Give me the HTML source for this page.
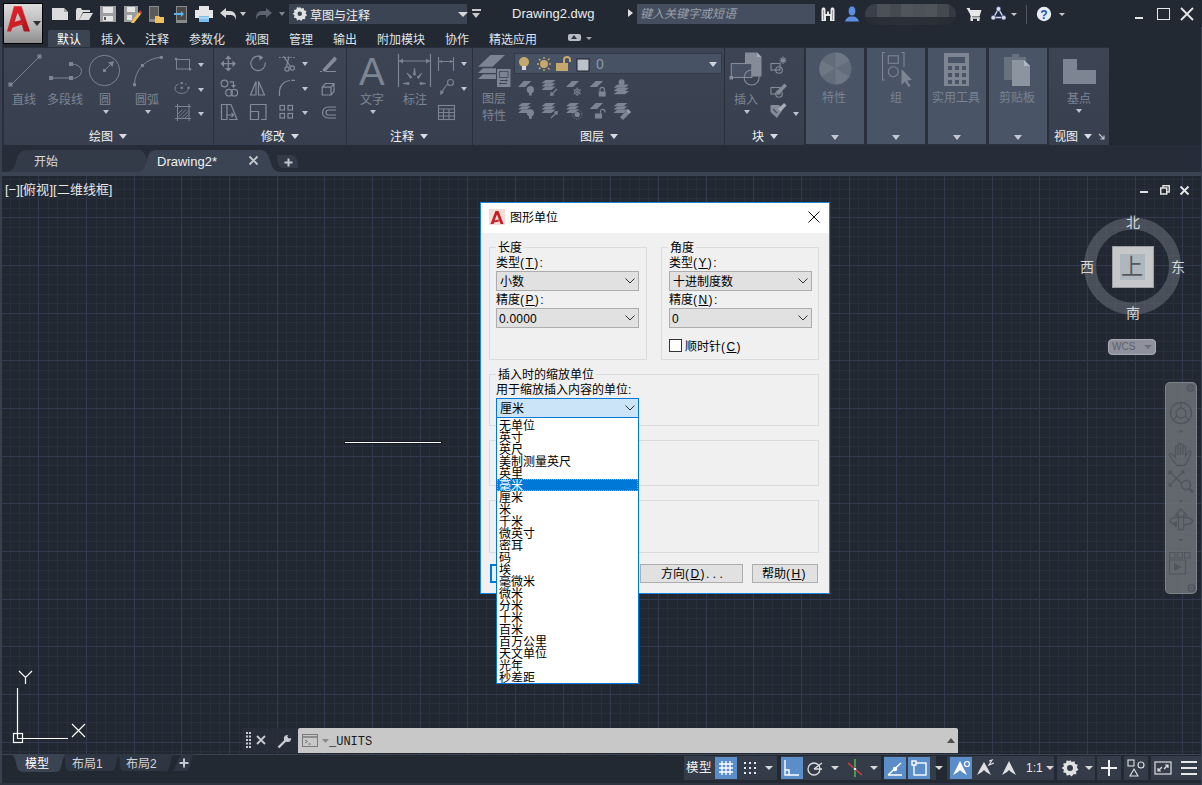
<!DOCTYPE html>
<html lang="zh-CN"><head><meta charset="utf-8"><title>AutoCAD</title>
<style>
*{box-sizing:border-box;margin:0;padding:0}
html,body{width:1202px;height:785px;overflow:hidden;background:#222932;font-family:"Liberation Sans",sans-serif;font-size:12px;color:#e6e6e6}
.a{position:absolute}
.t{position:absolute;white-space:nowrap;line-height:1}
svg{position:absolute;overflow:visible}
.tab{position:absolute;top:33.5px;font-size:12px;color:#dfe3ea;white-space:nowrap;line-height:1}
.pn{position:absolute;top:48px;height:97px;background:linear-gradient(#3d4555,#384050)}
.cp{position:absolute;top:48px;height:96px;background:#4a5467}
.lbl{position:absolute;font-size:12px;color:#7d8593;white-space:nowrap;line-height:1}
.ptl{position:absolute;top:131px;font-size:12px;color:#f2f2f2;white-space:nowrap;line-height:1}
.tri{position:absolute;width:0;height:0;border-left:4px solid transparent;border-right:4px solid transparent;border-top:5px solid #d8dce2}
.trs{position:absolute;width:0;height:0;border-left:3px solid transparent;border-right:3px solid transparent;border-top:4px solid #8d95a2}
.dlg{font-family:"Liberation Sans",sans-serif;color:#000;font-weight:350}
.gb{position:absolute;border:1px solid #dcdcdc}
.cb{position:absolute;background:#e1e1e1;border:1px solid #adadad}
.it{position:absolute;left:2px;height:12px;font-size:12px;line-height:12px;color:#000;font-weight:500;white-space:nowrap}
</style></head><body>
<!-- left strip -->
<div class="a" style="left:0;top:27px;width:2px;height:758px;background:#394150"></div>
<!-- app button -->
<div class="a" style="left:3px;top:3px;width:40px;height:41px;background:#000"></div>
<div class="a" style="left:4px;top:4px;width:38px;height:39px;background:linear-gradient(#dcdcdc,#b4b4b4 60%,#8e8e8e)"></div>
<svg style="left:0;top:0" width="40" height="40">
<defs><linearGradient id="lg" x1="0" y1="0" x2="1" y2="1"><stop offset="0" stop-color="#e8262e"/><stop offset="0.6" stop-color="#c81c24"/><stop offset="1" stop-color="#a0141a"/></linearGradient></defs>
<path d="M7 31.5L14 6.2H21.5L30 31.5H23.8L21.8 24.8L12.3 27.8L11 31.5ZM17.6 12.5L14.6 22L21 20Z" fill="url(#lg)" fill-rule="evenodd"/>
<path d="M14 6.2L11 17M21.5 6.2L26 20M12.3 27.8L22.5 23" stroke="#f06060" stroke-width="0.6" fill="none" opacity="0.6"/>
</svg>
<div class="a" style="left:33px;top:21px;width:0;height:0;border-left:4px solid transparent;border-right:4px solid transparent;border-top:5px solid #303030"></div>
<!-- QAT icons -->
<svg style="left:52px;top:8px" width="17" height="13"><path d="M0 0H12L16 4V12H0Z" fill="#dcdcdc"/><path d="M12 0V4H16" fill="#a0a0a0"/></svg>
<svg style="left:76px;top:8px" width="17" height="13"><path d="M0 2V12H3L7 4H14V2H6L5 0H1Z" fill="#dcdcdc"/><path d="M3 12H13L17 5H7Z" fill="#dcdcdc"/></svg>
<svg style="left:100px;top:6px" width="17" height="16"><path d="M0 0H16V16H0Z" fill="#9e9e9e"/><path d="M3 1H13V7H3Z" fill="#e6e6e6"/><path d="M3 10H13V15H3Z" fill="#e6e6e6"/><path d="M4 11H6V14H4Z" fill="#555"/></svg>
<svg style="left:124px;top:6px" width="17" height="17"><path d="M0 0H14V11L9 16H0Z" fill="#9e9e9e"/><path d="M3 1H11V6H3Z" fill="#e6e6e6"/><path d="M3 9H8V14H3Z" fill="#e6e6e6"/><path d="M8 15L15 6L17 8L10 17L7 17Z" fill="#f0c060"/><path d="M15 6L16.5 4.5L18 6.5L17 8Z" fill="#e04040"/></svg>
<svg style="left:149px;top:6px" width="16" height="17"><path d="M0 0H10V16H0Z" fill="#8a8a8a"/><path d="M1 1H9V13H1Z" fill="#5a5a5a"/><path d="M6 11H15V17H6Z" fill="#f0c060"/><path d="M6 10H10L11 11H6Z" fill="#f0c060"/></svg>
<svg style="left:174px;top:6px" width="14" height="17"><path d="M2 0H13V17H2Z" fill="#8a8a8a"/><path d="M3 1H12V14H3Z" fill="#4a4a4a"/><path d="M0 7H7V5L10 8L7 11V9H0Z" fill="#5ab4f0"/></svg>
<svg style="left:195px;top:6px" width="18" height="16"><path d="M4 0H14V4H4Z" fill="#e6e6e6"/><path d="M0 4H18V12H0Z" fill="#e6e6e6"/><path d="M4 10H14V16H4Z" fill="#78bff0"/><path d="M4 12H14" stroke="#e6e6e6"/></svg>
<svg style="left:220px;top:8px" width="16" height="12"><path d="M0 5L6 0V3H10C14 3 16 6 16 10V12C15 8 13 7 10 7H6V10Z" fill="#d8d8d8"/></svg>
<div class="tri" style="left:240px;top:12px;border-width:4px 3px 0;border-top-color:#c8c8c8"></div>
<svg style="left:256px;top:8px" width="16" height="12"><path d="M16 5L10 0V3H6C2 3 0 6 0 10V12C1 8 3 7 6 7H10V10Z" fill="#5d6370"/></svg>
<div class="tri" style="left:279px;top:12px;border-width:4px 3px 0;border-top-color:#7d838f"></div>
<!-- workspace combo -->
<div class="a" style="left:289px;top:4px;width:178px;height:20px;background:#3b4453"></div>
<svg style="left:292px;top:6px" width="15.5" height="15.5" viewBox="0 0 14 14"><path d="M7 0.5L8.3 2.3L10.5 1.7L10.9 3.9L13.1 4.5L12.3 6.6L13.6 8.4L11.8 9.6L11.9 11.9L9.6 11.8L8.4 13.6L6.6 12.3L4.5 13.1L3.9 10.9L1.7 10.5L2.3 8.3L0.5 7L2.3 5.7L1.7 3.5L3.9 3.1L4.5 0.9L6.6 1.7Z" fill="#e0e0e0"/><circle cx="7" cy="7" r="2" fill="#3b4453"/></svg>
<div class="t" style="left:310px;top:9.5px;font-size:12px;color:#f0f0f0">草图与注释</div>
<div class="tri" style="left:458px;top:12px;border-width:5px 5px 0;border-top-color:#d8d8d8"></div>
<div class="a" style="left:472px;top:9px;width:9px;height:2px;background:#c8c8c8"></div>
<div class="tri" style="left:472px;top:13px;border-width:5px 4.5px 0;border-top-color:#c8c8c8"></div>
<!-- title -->
<div class="t" style="left:512px;top:7px;font-size:13px;color:#ececec">Drawing2.dwg</div>
<div class="a" style="left:628px;top:9px;width:0;height:0;border-top:4px solid transparent;border-bottom:4px solid transparent;border-left:5px solid #e0e0e0"></div>
<!-- search -->
<div class="a" style="left:637px;top:4px;width:178px;height:20px;background:#454e5e"></div>
<div class="t" style="left:640px;top:8px;font-size:12px;color:#9aa0aa;font-style:italic">键入关键字或短语</div>
<!-- binoc/user -->
<svg style="left:820px;top:7px" width="16" height="15"><path d="M1.5 3C1.5 1 2.5 0.5 3.5 0.5S5.5 1 5.5 3V7H7V4.5H9V7H10.5V3C10.5 1 11.5 0.5 12.5 0.5S14.5 1 14.5 3V14H10V9H6V14H1.5Z" fill="#e8e8e8"/><path d="M3.5 3V13M12.5 3V13" stroke="#9a9a9a" stroke-width="1"/></svg>
<svg style="left:844px;top:5px" width="16" height="17"><ellipse cx="8" cy="6" rx="3.8" ry="5" fill="#5e8ee0" stroke="#1c2a40" stroke-width="0.8"/><path d="M1 16.5C2 13 4 12 6 11.5H10C12 12 14 13 15 16.5Z" fill="#5e8ee0"/></svg>
<div class="a" style="left:865px;top:4px;width:91px;height:21px;border-radius:10px;overflow:hidden;background:#262b34">
<div class="a" style="left:0;top:0;width:91px;height:13px;background:linear-gradient(90deg,#3a4049 0,#3a4049 12px,#4c5057 12px,#4c5057 25px,#454a52 25px,#454a52 36px,#51545a 36px,#51545a 48px,#4d5158 48px,#4d5158 60px,#505358 60px,#505358 72px,#44484f 72px,#44484f 84px,#353a42 84px)"></div>
<div class="a" style="left:0;top:13px;width:91px;height:8px;background:linear-gradient(90deg,#272c35,#2c3038 40%,#2a2e36 70%,#262b34)"></div>
</div>
<svg style="left:966px;top:7px" width="16" height="14"><path d="M0.5 1H3L4 3H15.5L13.5 9.5H5.5Z" fill="#e8e8e8"/><path d="M3 1L5.5 9.5L5 11H14" stroke="#e8e8e8" stroke-width="1.3" fill="none"/><rect x="4.5" y="11.5" width="2.5" height="2.5" fill="#e8e8e8"/><rect x="11" y="11.5" width="2.5" height="2.5" fill="#e8e8e8"/></svg>
<svg style="left:990px;top:6px" width="17" height="15"><path d="M8.5 3L3.5 11.5H13.5Z" stroke="#1a2a60" stroke-width="2.6" fill="none"/><path d="M8.5 3L3.5 11.5H13.5Z" stroke="#d8dce8" stroke-width="1.4" fill="none"/><circle cx="8.5" cy="3" r="2.4" fill="#d8dce8" stroke="#1a2a60" stroke-width="0.6"/><circle cx="3.3" cy="11.7" r="2.4" fill="#d8dce8" stroke="#1a2a60" stroke-width="0.6"/><circle cx="13.7" cy="11.7" r="2.4" fill="#d8dce8" stroke="#1a2a60" stroke-width="0.6"/></svg>
<div class="tri" style="left:1011px;top:13px;border-width:3px 3px 0;border-top-color:#c8c8c8"></div>
<div class="a" style="left:1026px;top:5px;width:1px;height:19px;background:#50575f"></div>
<svg style="left:1036px;top:6px" width="16" height="16"><circle cx="8" cy="8" r="7.2" fill="#e8ecf4"/><text x="8" y="12.5" font-size="12" font-weight="bold" text-anchor="middle" fill="#2050a8" font-family="Liberation Sans">?</text></svg>
<div class="tri" style="left:1059px;top:13px;border-width:3px 3px 0;border-top-color:#c8c8c8"></div>
<!-- window controls -->
<div class="a" style="left:1135px;top:17px;width:8px;height:2px;background:#e6e6e6"></div>
<div class="a" style="left:1157px;top:8px;width:13px;height:12px;border:1.5px solid #e6e6e6"></div>
<svg style="left:1180px;top:7px" width="14" height="14"><path d="M1 1L13 13M13 1L1 13" stroke="#e6e6e6" stroke-width="1.8"/></svg>
<!-- tabs row -->
<div class="a" style="left:48px;top:30px;width:42px;height:18px;background:#3b4453;border-radius:2px 2px 0 0"></div>
<div class="tab" style="left:57px;color:#ffffff">默认</div>
<div class="tab" style="left:101px">插入</div>
<div class="tab" style="left:145px">注释</div>
<div class="tab" style="left:189px">参数化</div>
<div class="tab" style="left:245px">视图</div>
<div class="tab" style="left:289px">管理</div>
<div class="tab" style="left:333px">输出</div>
<div class="tab" style="left:377px">附加模块</div>
<div class="tab" style="left:445px">协作</div>
<div class="tab" style="left:489px">精选应用</div>
<div class="a" style="left:568px;top:34px;width:13px;height:7px;background:#b8bcc4;border-radius:2px"></div>
<div class="a" style="left:571px;top:35px;width:0;height:0;border-left:3.5px solid transparent;border-right:3.5px solid transparent;border-bottom:4px solid #30353f"></div>
<div class="tri" style="left:586px;top:37px;border-width:3px 3px 0;border-top-color:#a0a4ac"></div>
<!-- ribbon panels -->
<div class="a" style="left:2px;top:47px;width:1107px;height:98px;background:#2a303b"></div>
<div class="a" style="left:1109px;top:47px;width:93px;height:98px;background:#222932"></div>
<div class="pn" style="left:4px;width:209px"></div>
<div class="pn" style="left:214px;width:132px"></div>
<div class="pn" style="left:347px;width:125px"></div>
<div class="pn" style="left:473px;width:251px"></div>
<div class="pn" style="left:725px;width:79px"></div>
<div class="cp" style="left:806px;width:58px"></div>
<div class="cp" style="left:867px;width:58px"></div>
<div class="cp" style="left:928px;width:58px"></div>
<div class="cp" style="left:989px;width:58px"></div>
<div class="pn" style="left:1049px;width:60px"></div>
<!-- panel titles -->
<div class="ptl" style="left:89px">绘图</div><div class="tri" style="left:119px;top:134px"></div>
<div class="ptl" style="left:261px">修改</div><div class="tri" style="left:291px;top:134px"></div>
<div class="ptl" style="left:390px">注释</div><div class="tri" style="left:420px;top:134px"></div>
<div class="ptl" style="left:580px">图层</div><div class="tri" style="left:610px;top:134px"></div>
<div class="ptl" style="left:752px">块</div><div class="tri" style="left:770px;top:134px"></div>
<div class="tri" style="left:831px;top:135px;border-top-color:#c4c8d0"></div>
<div class="tri" style="left:892px;top:135px;border-top-color:#c4c8d0"></div>
<div class="tri" style="left:953px;top:135px;border-top-color:#c4c8d0"></div>
<div class="tri" style="left:1014px;top:135px;border-top-color:#c4c8d0"></div>
<div class="ptl" style="left:1054px">视图</div><div class="tri" style="left:1084px;top:134px"></div>
<svg style="left:1098px;top:133px" width="7" height="7"><path d="M1 1L6 6M6 2.5V6H2.5" stroke="#c4c8d0" stroke-width="1.1" fill="none"/></svg>
<!-- draw panel -->
<svg style="left:8px;top:54px" width="170" height="36" viewBox="0 0 170 36" fill="none" stroke="#7d8593" stroke-width="1">
<path d="M3 31L31 3"/><rect x="1" y="29" width="3" height="3" fill="#7d8593"/><rect x="30" y="1" width="3" height="3" fill="#7d8593"/>
<path d="M44 24H63"/><path d="M63.5 10A10 7.2 0 0 1 63.5 24.5"/><rect x="41.5" y="22.5" width="3" height="3" fill="#7d8593"/><rect x="61.5" y="22.5" width="3" height="3" fill="#7d8593"/><rect x="61.5" y="8.5" width="3" height="3" fill="#7d8593"/>
<circle cx="96.4" cy="16.5" r="15.2"/><path d="M97 16L103 10"/><path d="M106 7L104.5 13L100 8.5Z" fill="#7d8593" stroke="none"/><rect x="95" y="15" width="3" height="3" fill="#7d8593" stroke="none"/>
<path d="M126.5 30.7A27.3 27.3 0 0 1 153.3 3.4"/><rect x="125" y="29.2" width="3" height="3" fill="#7d8593" stroke="none"/><rect x="132.9" y="10" width="3" height="3" fill="#7d8593" stroke="none"/><rect x="151.8" y="1.9" width="3" height="3" fill="#7d8593" stroke="none"/>
</svg>
<div class="lbl" style="left:12px;top:94px">直线</div>
<div class="lbl" style="left:47px;top:94px">多段线</div>
<div class="lbl" style="left:99px;top:94px">圆</div>
<div class="trs" style="left:103px;top:110px;border-top-color:#c0c4cc"></div>
<div class="lbl" style="left:135px;top:94px">圆弧</div>
<div class="trs" style="left:145px;top:110px;border-top-color:#c0c4cc"></div>
<svg style="left:174px;top:55px" width="40" height="80" fill="none" stroke="#7d8593" stroke-width="1">
<rect x="2.5" y="4.5" width="13" height="9.5"/><rect x="0.8" y="2.8" width="2.4" height="2.4" fill="#7d8593" stroke="none"/><rect x="14.8" y="13" width="2.4" height="2.4" fill="#7d8593" stroke="none"/>
<path d="M4.5 29A6.7 5 0 1 0 14.2 34.5M11 28.5L12.5 29.5" /><rect x="6.6" y="27" width="2.2" height="2.2" fill="#7d8593" stroke="none"/><rect x="6.6" y="31.7" width="2.2" height="2.2" fill="#7d8593" stroke="none"/><rect x="13.4" y="31.7" width="2.2" height="2.2" fill="#7d8593" stroke="none"/>
<path d="M1 51.5H17M1 63.5H17M3.5 49V66M15 49V66"/><path d="M4 59L8.5 54.5M4 62.5L12 54.5M7.5 63L14.5 56M11 63L14.5 59.5" stroke-width="0.9"/>
</svg>
<div class="trs" style="left:198px;top:63px;border-top-color:#c0c4cc"></div>
<div class="trs" style="left:198px;top:88px;border-top-color:#c0c4cc"></div>
<div class="trs" style="left:198px;top:112px;border-top-color:#c0c4cc"></div>
<!-- modify panel -->
<svg style="left:214px;top:50px" width="132" height="75" fill="none" stroke="#858c98" stroke-width="1.2">
<path d="M14.3 8V19.5M8.5 13.7H20"/><path d="M14.3 5.5L11 9H17.6ZM14.3 21.5L11 18H17.6ZM6.5 13.7L10 10.5V17ZM22 13.7L18.5 10.5V17Z" fill="#858c98" stroke="none"/>
<path d="M47 6.8A7.2 7.2 0 1 0 51.2 12.5"/><path d="M45 5L49.5 7.5L45.5 10.5Z" fill="#858c98" stroke="none"/>
<path d="M65 7.5H81" stroke-dasharray="1.6 1.2"/><path d="M69.5 6L77 17.5M75 6.5L72.5 16.5"/><circle cx="73" cy="19" r="2.2"/><circle cx="78.3" cy="18" r="2.2"/>
<path d="M108.5 19.5L120.5 6.5L122.5 8.5V10L111 22L109 21Z" fill="#858c98" stroke="none"/><path d="M106 21.5H108M112 21.5H122"/>
<circle cx="10.5" cy="33.5" r="3.3"/><path d="M15.5 31.8H19.5V36.5"/><path d="M17 35L19.5 38L22 35Z" fill="#858c98" stroke="none"/><circle cx="15" cy="42.7" r="3.3"/><circle cx="20.3" cy="42.7" r="3.3"/>
<path d="M36.5 45H42V31.5ZM44.5 45H50.5L44.5 31.5Z"/>
<path d="M65.5 46V41A11 11 0 0 1 76 30.5M77.5 30.3H81"/>
<path d="M108.2 37.2H117V45H108.2ZM108.2 37.2L111.5 33.5H120V41.5L117 45M117 37.2L120 33.5"/>
<path d="M7.5 54.5H13V69.5H7.5ZM13 54.5H17L23 69.5H15"/><path d="M12 65H19M17.5 63L19.5 65L17.5 67"/>
<path d="M36.5 54.5H52V69.5H47M36.5 54.5V69.5"/><path d="M36.5 61.5H44.5V69.5H36.5Z"/>
<rect x="66" y="55.5" width="4.5" height="4.5"/><rect x="74" y="55.5" width="4.5" height="4.5"/><rect x="66" y="63.5" width="4.5" height="4.5"/><rect x="74" y="63.5" width="4.5" height="4.5"/>
<path d="M122 57H114A5.5 5.5 0 0 0 114 68H122M122 60H114.5A2.5 2.5 0 0 0 114.5 65H122"/>
</svg>
<div class="trs" style="left:302px;top:62px;border-top-color:#c0c4cc"></div>
<div class="trs" style="left:302px;top:87px;border-top-color:#c0c4cc"></div>
<div class="trs" style="left:302px;top:111px;border-top-color:#c0c4cc"></div>
<!-- annotate panel -->
<div class="t" style="left:359px;top:52.5px;font-size:38.5px;color:#7d8593">A</div>
<div class="lbl" style="left:360px;top:94px">文字</div>
<div class="trs" style="left:370px;top:110px;border-top-color:#c0c4cc"></div>
<svg style="left:397px;top:54px" width="36" height="34" fill="none" stroke="#7d8593" stroke-width="1.2">
<path d="M1.5 0V33M33.5 0V33M2 7H33"/><path d="M2 7L6 4.5V9.5ZM33 7L29 4.5V9.5Z" fill="#7d8593" stroke="none"/>
<path d="M17.5 14L18.5 21H16.5ZM10 19L15 23L13.5 24.5ZM25 19L20 23L21.5 24.5ZM6 29.5L12 28.5V30.5ZM29 29.5L23 28.5V30.5Z" fill="#7d8593" stroke="#7d8593" stroke-width="0.8"/>
</svg>
<div class="lbl" style="left:403px;top:94px">标注</div>
<svg style="left:437px;top:55px" width="20" height="70" fill="none" stroke="#7d8593" stroke-width="1.1">
<path d="M1.5 2V16M16.5 2V16M2 6.5H16"/><path d="M2 6.5L5 5V8ZM16 6.5L13 5V8Z" fill="#7d8593" stroke="none"/>
<circle cx="13.5" cy="27.5" r="3"/><path d="M10.5 29L7 33.5L4 39"/><path d="M3 40L3.5 35L7 37.5Z" fill="#7d8593" stroke="none"/>
<rect x="1.5" y="50.5" width="16" height="14"/><path d="M1.5 54H17.5M1.5 57.5H17.5M1.5 61H17.5M6.5 54V64.5M12 54V64.5"/>
</svg>
<div class="trs" style="left:461px;top:62px;border-top-color:#c0c4cc"></div>
<div class="trs" style="left:461px;top:87px;border-top-color:#c0c4cc"></div>
<!-- layer panel -->
<svg style="left:473px;top:48px" width="40" height="42">
<path d="M5 18.8L17.5 7H32L19.5 18.8Z" fill="#7d8593"/>
<path d="M5 25L10 20.3H30L25 25Z" fill="#7d8593"/>
<path d="M5 31L10 26.3H30L25 31Z" fill="#7d8593"/>
<rect x="23" y="20" width="15" height="19.5" fill="#3b4453"/>
<rect x="24" y="21" width="13.5" height="18" fill="#7d8593"/><rect x="26" y="23" width="9.5" height="7" fill="#4a5263"/><rect x="27" y="24" width="7.5" height="5" fill="#7d8593"/>
<path d="M27 32.5H34M27 35.5H34" stroke="#3b4453" stroke-width="1"/><path d="M33 31.5L34.5 32.5L33 33.5M28 34.5L26.5 35.5L28 36.5" stroke="#3b4453" stroke-width="0.8" fill="none"/>
</svg>
<div class="lbl" style="left:482px;top:93px">图层</div>
<div class="lbl" style="left:482px;top:110px">特性</div>
<div class="a" style="left:514px;top:53px;width:208px;height:21px;background:#485265;border:1px solid #333a47"></div>
<svg style="left:517px;top:56px" width="80" height="16">
<circle cx="7" cy="6" r="5" fill="#c4a86c"/><rect x="5" y="10" width="4" height="4" fill="#d8d8d8"/>
<circle cx="27" cy="8" r="4" fill="#c4a86c"/><path d="M27 1V3M27 13V15M20 8H22M32 8H34M22 3L23.5 4.5M31 12L32.5 13.5M22 13L23.5 11.5M31 4L32.5 2.5" stroke="#c4a86c" stroke-width="1.3"/>
<rect x="39" y="7" width="12" height="8" fill="#c4a86c"/><path d="M47 7V4A3 3 0 0 1 53 4V6" stroke="#c4a86c" stroke-width="2" fill="none"/>
<rect x="60" y="3" width="12" height="12" fill="#bcc2cc" stroke="#1e232b" stroke-width="1"/>
</svg>
<div class="t" style="left:596px;top:57px;font-size:14px;color:#8e96a4">0</div>
<div class="tri" style="left:709px;top:62px;border-width:5px 4px 0;border-top-color:#d0d4da"></div>
<svg style="left:515px;top:78px" width="125" height="45" fill="#7d8593"><path d="M3 9L8.7 3H16.3L10.1 9Z"/><circle cx="15.4" cy="11.6" r="3.6"/><rect x="14" y="14.5" width="2.8" height="3"/><path d="M26.5 5.3L30.5 2.0H40.5L36.5 5.3Z"/><path d="M26.5 8.6L30.5 5.3H40.5L36.5 8.6Z"/><path d="M26.5 11.899999999999999L30.5 8.6H40.5L36.5 11.899999999999999Z"/><path d="M42 11L36 17" stroke="#7d8593" stroke-width="1.2"/><path d="M35 18L35.8 13.5L39.5 17.2Z"/><path d="M51 9L57 3H64L58 9Z"/><g stroke="#7d8593" stroke-width="0.9" fill="none"><circle cx="62.2" cy="13.8" r="2.8"/><path d="M62.2 9.5V18M58.5 11.6L65.9 16M58.5 16L65.9 11.6"/></g><path d="M74.7 9L80.7 3H88L82 9Z"/><rect x="83.7" y="13.5" width="7" height="5"/><path d="M85 13.5V11.5A2.2 2.2 0 0 1 89.4 11.5V13.5" stroke="#7d8593" stroke-width="1.2" fill="none"/><path d="M98.5 9.8L102.5 6.5H114.0L110.0 9.8Z"/><path d="M98.5 13.0L102.5 9.7H114.0L110.0 13.0Z"/><path d="M98.5 16.2L102.5 12.9H114.0L110.0 16.2Z"/><circle cx="106.6" cy="4.2" r="3"/><path d="M3 28.3L7 25.0H16L12 28.3Z"/><path d="M3 31.6L7 28.3H16L12 31.6Z"/><path d="M3 34.9L7 31.6H16L12 34.9Z"/><circle cx="15.4" cy="34.8" r="3.6"/><rect x="14" y="37.8" width="2.8" height="3"/><path d="M26.5 28.3L30.5 25.0H40.5L36.5 28.3Z"/><path d="M26.5 31.6L30.5 28.3H40.5L36.5 31.6Z"/><path d="M26.5 34.9L30.5 31.6H40.5L36.5 34.9Z"/><path d="M36 40L42 34" stroke="#7d8593" stroke-width="1.2"/><path d="M43 33L42.2 37.5L38.5 33.8Z"/><path d="M51 28.3L55 25.0H64L60 28.3Z"/><path d="M51 31.6L55 28.3H64L60 31.6Z"/><path d="M51 34.9L55 31.6H64L60 34.9Z"/><circle cx="62.2" cy="36.5" r="2.6"/><circle cx="62.2" cy="36.5" r="4.6" fill="none" stroke="#7d8593" stroke-width="0.9" stroke-dasharray="1 1.4"/><path d="M74.7 31L80.7 25H88L82 31Z"/><rect x="80" y="35.5" width="7" height="5"/><path d="M85.5 35.5V33.5A2.2 2.2 0 0 1 89.9 33.5V34.5" stroke="#7d8593" stroke-width="1.2" fill="none"/><path d="M98.5 28.3L102.5 25.0H112.5L108.5 28.3Z"/><path d="M98.5 31.6L102.5 28.3H112.5L108.5 31.6Z"/><path d="M98.5 34.9L102.5 31.6H112.5L108.5 34.9Z"/><path d="M105 39L111 33L114 36L108 42Z" fill="#7d8593"/><path d="M111 33L113 31L116 34L114 36Z" fill="#9aa2ae"/></svg>
<!-- block panel -->
<svg style="left:725px;top:48px" width="80" height="80">
<path d="M20 4.5H32L36.5 9V28.5H20Z" fill="#858c98"/><path d="M32 4.5V9H36.5Z" fill="#a8aeb8"/>
<rect x="6.3" y="15.5" width="20.5" height="14" fill="#485164" stroke="#858c98" stroke-width="1.1"/><circle cx="26.6" cy="29.5" r="7.5" fill="none" stroke="#858c98" stroke-width="1.1"/><rect x="4.5" y="28" width="3.5" height="3.5" fill="#858c98"/>
<g fill="none" stroke="#858c98" stroke-width="1.1">
<rect x="46" y="15.5" width="9" height="6.5"/><circle cx="54" cy="22" r="3.3"/><path d="M58 8.5V16M54.5 12.3H61.5M55.5 10L60.5 14.5M60.5 10L55.5 14.5"/>
<rect x="46" y="39.5" width="9" height="6.5"/><circle cx="54" cy="46" r="3.3"/>
</g>
<path d="M52 43L59.5 35.5L62 38L54.5 45.5L51.5 46Z" fill="#858c98"/>
<path d="M45.5 57H54L58 61L52 70L45.5 64Z" fill="#858c98"/><path d="M53 61L59 55L61.5 57.5L55.5 63.5Z" fill="#a8aeb8"/><path d="M48 61L52 65" stroke="#485164" stroke-width="1.2"/>
</svg>
<div class="lbl" style="left:734px;top:94px">插入</div>
<div class="trs" style="left:744px;top:110px;border-top-color:#c0c4cc"></div>
<div class="trs" style="left:793px;top:112px;border-top-color:#c0c4cc"></div>
<!-- collapsed panels -->
<svg style="left:819px;top:52px" width="34" height="34"><circle cx="16.5" cy="16.5" r="16" fill="#626c7a"/><path d="M16.5 16.5L16.5 0.5A16 16 0 0 1 30.4 8.5ZM16.5 16.5L30.4 24.5A16 16 0 0 1 16.5 32.5ZM16.5 16.5L2.6 24.5A16 16 0 0 1 2.6 8.5Z" fill="#6e7885"/></svg>
<div class="lbl" style="left:822px;top:92px;color:#7a8391">特性</div>
<svg style="left:880px;top:50px" width="34" height="38" fill="none" stroke="#7d8593" stroke-width="1.1">
<path d="M5 2.5H2.5V30H5M21.5 2.5H24V17"/><rect x="8.3" y="5.8" width="10" height="7.5"/><circle cx="13.3" cy="21.7" r="5"/>
<path d="M21.5 19V35L25 31.5L28.5 37L30.5 36L27 30.5L32 30Z" fill="#7d8593" stroke="none"/>
</svg>
<div class="lbl" style="left:890px;top:92px;color:#7a8391">组</div>
<svg style="left:944px;top:53px" width="26" height="33"><rect x="0" y="0" width="25" height="33" fill="#7d8593"/><rect x="4" y="4" width="17" height="6" fill="#4a5467"/><path d="M4 13H8V17H4ZM11 13H15V17H11ZM18 13H22V17H18ZM4 20H8V24H4ZM11 20H15V24H11ZM18 20H22V24H18ZM4 27H8V31H4ZM11 27H15V31H11ZM18 27H22V31H18Z" fill="#4a5467"/></svg>
<div class="lbl" style="left:932px;top:92px;color:#7a8391">实用工具</div>
<svg style="left:1004px;top:52px" width="30" height="34"><path d="M0 5H8V2H15V5H22V28H0Z" fill="#68717e"/><path d="M8 8H20L26 14V34H8Z" fill="#8c94a0"/><path d="M20 8V14H26" fill="#b0b6c0"/></svg>
<div class="lbl" style="left:999px;top:92px;color:#7a8391">剪贴板</div>
<svg style="left:1063px;top:59px" width="34" height="26"><path d="M0 0H14V11H33V25H0Z" fill="#7d8593"/></svg>
<div class="lbl" style="left:1067px;top:93px;color:#7a8391">基点</div>
<div class="trs" style="left:1076px;top:109px;border-top-color:#c0c4cc"></div>
<!-- file tabs -->
<div class="a" style="left:2px;top:145px;width:1200px;height:31px;background:#272d38"></div>
<div class="a" style="left:2px;top:172px;width:1200px;height:4px;background:#3b4453"></div>
<svg style="left:0;top:145px" width="310" height="31">
<path d="M4 27C11 27 14 24 16 17C18 8 21 5 28 5H138C144 5 146 10 147 17C148 24 150 27 156 27Z" fill="#343b48"/>
<path d="M136 27C143 27 145 23 147 15C149 7 151 5 158 5H260C266 5 268 9 270 15C272 23 274 27 282 27Z" fill="#3b4453"/>
<path d="M277 10H292C296 10 298 15 298 23H283C279 23 277 18 277 10Z" fill="#343b48"/>
</svg>
<div class="t" style="left:34px;top:156px;font-size:12px;color:#d8dce2">开始</div>
<div class="t" style="left:157px;top:155px;font-size:13px;color:#eef0f2">Drawing2*</div>
<svg style="left:249px;top:156px" width="9" height="9"><path d="M0.5 0.5L8.5 8.5M8.5 0.5L0.5 8.5" stroke="#c4c8ce" stroke-width="1.8"/></svg>
<svg style="left:284px;top:158px" width="9" height="9"><path d="M4.5 0.5V8.5M0.5 4.5H8.5" stroke="#c4c8ce" stroke-width="2"/></svg>
<!-- drawing area -->
<div class="a" style="left:2px;top:176px;width:1200px;height:578px;background:#212831"></div>
<svg width="1200" height="578" style="position:absolute;left:2px;top:176px"><path d="M8.5 0V578 M17.5 0V578 M27.5 0V578 M46.5 0V578 M55.5 0V578 M65.5 0V578 M75.5 0V578 M94.5 0V578 M103.5 0V578 M113.5 0V578 M122.5 0V578 M141.5 0V578 M151.5 0V578 M160.5 0V578 M170.5 0V578 M189.5 0V578 M198.5 0V578 M208.5 0V578 M217.5 0V578 M237.5 0V578 M246.5 0V578 M256.5 0V578 M265.5 0V578 M284.5 0V578 M294.5 0V578 M303.5 0V578 M313.5 0V578 M332.5 0V578 M341.5 0V578 M351.5 0V578 M360.5 0V578 M380.5 0V578 M389.5 0V578 M399.5 0V578 M408.5 0V578 M427.5 0V578 M437.5 0V578 M446.5 0V578 M456.5 0V578 M475.5 0V578 M484.5 0V578 M494.5 0V578 M503.5 0V578 M523.5 0V578 M532.5 0V578 M542.5 0V578 M551.5 0V578 M570.5 0V578 M580.5 0V578 M589.5 0V578 M599.5 0V578 M618.5 0V578 M627.5 0V578 M637.5 0V578 M646.5 0V578 M665.5 0V578 M675.5 0V578 M685.5 0V578 M694.5 0V578 M713.5 0V578 M723.5 0V578 M732.5 0V578 M742.5 0V578 M761.5 0V578 M770.5 0V578 M780.5 0V578 M789.5 0V578 M808.5 0V578 M818.5 0V578 M828.5 0V578 M837.5 0V578 M856.5 0V578 M866.5 0V578 M875.5 0V578 M885.5 0V578 M904.5 0V578 M913.5 0V578 M923.5 0V578 M932.5 0V578 M951.5 0V578 M961.5 0V578 M971.5 0V578 M980.5 0V578 M999.5 0V578 M1009.5 0V578 M1018.5 0V578 M1028.5 0V578 M1047.5 0V578 M1056.5 0V578 M1066.5 0V578 M1075.5 0V578 M1094.5 0V578 M1104.5 0V578 M1113.5 0V578 M1123.5 0V578 M1142.5 0V578 M1152.5 0V578 M1161.5 0V578 M1171.5 0V578 M1190.5 0V578 M1199.5 0V578 M0 3.5H1200 M0 13.5H1200 M0 22.5H1200 M0 32.5H1200 M0 51.5H1200 M0 60.5H1200 M0 70.5H1200 M0 79.5H1200 M0 98.5H1200 M0 108.5H1200 M0 118.5H1200 M0 127.5H1200 M0 146.5H1200 M0 156.5H1200 M0 165.5H1200 M0 175.5H1200 M0 194.5H1200 M0 203.5H1200 M0 213.5H1200 M0 222.5H1200 M0 241.5H1200 M0 251.5H1200 M0 261.5H1200 M0 270.5H1200 M0 289.5H1200 M0 299.5H1200 M0 308.5H1200 M0 318.5H1200 M0 337.5H1200 M0 346.5H1200 M0 356.5H1200 M0 365.5H1200 M0 384.5H1200 M0 394.5H1200 M0 404.5H1200 M0 413.5H1200 M0 432.5H1200 M0 442.5H1200 M0 451.5H1200 M0 461.5H1200 M0 480.5H1200 M0 489.5H1200 M0 499.5H1200 M0 508.5H1200 M0 527.5H1200 M0 537.5H1200 M0 546.5H1200 M0 556.5H1200 M0 575.5H1200" stroke="#292f3d" stroke-width="1" fill="none" shape-rendering="crispEdges"/><path d="M36.5 0V578 M84.5 0V578 M132.5 0V578 M179.5 0V578 M227.5 0V578 M275.5 0V578 M322.5 0V578 M370.5 0V578 M418.5 0V578 M465.5 0V578 M513.5 0V578 M561.5 0V578 M608.5 0V578 M656.5 0V578 M704.5 0V578 M751.5 0V578 M799.5 0V578 M847.5 0V578 M894.5 0V578 M942.5 0V578 M990.5 0V578 M1037.5 0V578 M1085.5 0V578 M1133.5 0V578 M1180.5 0V578 M0 41.5H1200 M0 89.5H1200 M0 137.5H1200 M0 184.5H1200 M0 232.5H1200 M0 280.5H1200 M0 327.5H1200 M0 375.5H1200 M0 423.5H1200 M0 470.5H1200 M0 518.5H1200 M0 566.5H1200" stroke="#333950" stroke-width="1" fill="none" shape-rendering="crispEdges"/></svg>
<div class="t" style="left:5px;top:183px;font-size:13px;color:#e8e8e8">[−][俯视][二维线框]</div>
<div class="a" style="left:1140px;top:191px;width:8px;height:2px;background:#e0e0e0"></div>
<svg style="left:1160px;top:185px" width="10" height="10" fill="none" stroke="#e0e0e0" stroke-width="1.5"><rect x="0.75" y="3" width="6" height="6"/><path d="M3 3V0.75H9.25V7H7"/></svg>
<svg style="left:1180px;top:186px" width="9" height="9"><path d="M0.5 0.5L8.5 8.5M8.5 0.5L0.5 8.5" stroke="#e8e8e8" stroke-width="1.8"/></svg>
<!-- line -->
<div class="a" style="left:344px;top:441px;width:98px;height:3px;background:#121720"></div><div class="a" style="left:345px;top:442px;width:96px;height:1px;background:#ffffff"></div>
<!-- UCS -->
<svg style="left:0;top:660px" width="100" height="90" fill="none" stroke="#ffffff" stroke-width="1.2">
<path d="M17.5 28V78.5H68"/><rect x="13.5" y="73.5" width="9" height="9"/>
<path d="M19 11L25.5 17.5L32 11M25.5 17.5V24"/>
<path d="M72 64L85 77M85 64L72 77"/>
</svg>
<!-- viewcube -->
<svg style="left:1080px;top:213px" width="106" height="106"><circle cx="52.5" cy="53" r="42.5" fill="none" stroke="rgba(118,124,134,0.48)" stroke-width="12"/></svg>
<div class="a" style="left:1112px;top:246px;width:42px;height:42px;background:#c5c7c9;border:1px solid #9ca0a6"></div>
<div class="a" style="left:1120px;top:254px;width:25px;height:26px;background:#aeb6be"></div>
<div class="t" style="left:1121px;top:256px;font-size:22px;color:#55595e">上</div>
<div class="t" style="left:1126px;top:215px;font-size:14px;color:#d8d8d8">北</div>
<div class="t" style="left:1126px;top:306px;font-size:14px;color:#d8d8d8">南</div>
<div class="t" style="left:1080px;top:260px;font-size:14px;color:#d8d8d8">西</div>
<div class="t" style="left:1171px;top:260px;font-size:14px;color:#d8d8d8">东</div>
<div class="a" style="left:1108px;top:339px;width:48px;height:16px;background:#8f929c;border-radius:4px;border:1px solid #a8abb4"></div>
<div class="t" style="left:1112px;top:342px;font-size:10px;color:#5c6068">WCS</div>
<div class="a" style="left:1144px;top:345px;width:0;height:0;border-left:4px solid transparent;border-right:4px solid transparent;border-top:4px solid #6c7078"></div>
<!-- navbar -->
<div class="a" style="left:1165px;top:382px;width:32px;height:212px;background:rgba(112,117,124,0.82);border-radius:5px;border:1px solid rgba(140,145,152,0.7)"></div>
<svg style="left:1165px;top:382px" width="32" height="212" fill="none" stroke="#50555d" stroke-width="1.3">
<circle cx="25.5" cy="6" r="3.2"/><path d="M23.5 4L27.5 8M27.5 4L23.5 8" stroke-width="1"/>
<circle cx="16" cy="31" r="10.5"/><circle cx="16" cy="31" r="5"/><path d="M8 38L12 34M20 34L24 38M16 21V26"/>
<path d="M13.5 48.5H18.5L16 51Z" fill="#50555d" stroke="none"/>
<path d="M12 83.5C9 80 6 76 4.5 73.5C4 72 5.5 71 7 72L10.5 75.5V65C10.5 63.5 13 63.5 13 65V73V62.5C13 61 15.5 61 15.5 62.5V73V63C15.5 61.5 18 61.5 18 63V73V65C18 63.5 20.5 63.5 20.5 65V74L23 70C24 68.5 26.5 69 26 71L22 80C21 82.5 19 83.5 17 83.5Z"/>
<path d="M4 89L17 102M19 89L4 104"/><path d="M3.5 88.5H8L3.5 93ZM19.5 88.5V93L15 88.5ZM3.5 104.5V100L8 104.5Z" fill="#50555d" stroke="none"/><circle cx="21" cy="103" r="4.5" stroke-width="1.5"/><path d="M24.5 106.5L28 110.5" stroke-width="2.2"/>
<path d="M13.5 118H18.5L16 120.5Z" fill="#50555d" stroke="none"/>
<path d="M13.5 147.5V133H10.5L16 127L21.5 133H18.5V147.5Z"/><path d="M10.5 142C6.5 141 4.5 140 4.5 139C4.5 136.8 9.5 135 16 135S27.5 136.8 27.5 139S23 142.5 18.5 143"/><path d="M11 139.5L7.5 142.5L11 145" fill="#50555d" stroke="none"/><path d="M12 139L7 142L12 145Z" fill="#50555d" stroke="none"/>
<path d="M13.5 157H18.5L16 159.5Z" fill="#50555d" stroke="none"/>
<rect x="4.5" y="170.5" width="5.5" height="5.5" stroke-width="1"/><rect x="12" y="170.5" width="5.5" height="5.5" stroke-width="1"/><rect x="19.5" y="170.5" width="5.5" height="5.5" stroke-width="1"/>
<rect x="4.5" y="178" width="16" height="14" stroke-width="1.1"/><path d="M9 181L16.5 185L9 189Z" fill="#50555d" stroke="none"/>
<circle cx="26.4" cy="206" r="3.2"/><path d="M23.4 206H29.4" stroke-width="1"/>
</svg>
<!-- dialog -->
<div class="dlg">
<div class="a" style="left:480px;top:202px;width:350px;height:392px;background:#f0f0f0;border:1px solid #1883d7"></div>
<div class="a" style="left:481px;top:203px;width:348px;height:30px;background:#ffffff"></div>
<svg style="left:489px;top:209px" width="16" height="16"><rect width="16" height="16" fill="#f4dcd8"/><path d="M1.5 15L6.5 2H9.5L14.5 15H11.5L8 5.5L5.5 11.5L9.5 10.5L10 12.5L5 13.5L4.5 15Z" fill="#c41e24"/></svg>
<div class="t" style="left:510px;top:212px;font-size:12px;color:#000">图形单位</div>
<svg style="left:808px;top:211px" width="12" height="12"><path d="M0.5 0.5L11.5 11.5M11.5 0.5L0.5 11.5" stroke="#111" stroke-width="1"/></svg>
<!-- length group -->
<div class="gb" style="left:489px;top:247px;width:158px;height:113px"></div>
<div class="a" style="left:496px;top:240px;width:28px;height:12px;background:#f0f0f0"></div>
<div class="t" style="left:498px;top:242px;font-size:12px">长度</div>
<div class="t" style="left:496px;top:257px;font-size:12px">类型<span style="letter-spacing:1.4px">(<u>T</u>):</span></div>
<div class="cb" style="left:496px;top:271px;width:143px;height:20px"></div>
<div class="t" style="left:500px;top:276px;font-size:12px">小数</div>
<svg style="left:625px;top:278px" width="10" height="6"><path d="M0.5 0.5L5 5L9.5 0.5" stroke="#333" fill="none"/></svg>
<div class="t" style="left:496px;top:294px;font-size:12px">精度<span style="letter-spacing:1.4px">(<u>P</u>):</span></div>
<div class="cb" style="left:496px;top:308px;width:143px;height:20px"></div>
<div class="t" style="left:499px;top:313px;font-size:12px;letter-spacing:0.2px">0.0000</div>
<svg style="left:625px;top:315px" width="10" height="6"><path d="M0.5 0.5L5 5L9.5 0.5" stroke="#333" fill="none"/></svg>
<!-- angle group -->
<div class="gb" style="left:661px;top:247px;width:158px;height:113px"></div>
<div class="a" style="left:668px;top:240px;width:28px;height:12px;background:#f0f0f0"></div>
<div class="t" style="left:670px;top:242px;font-size:12px">角度</div>
<div class="t" style="left:669px;top:257px;font-size:12px">类型<span style="letter-spacing:1.4px">(<u>Y</u>):</span></div>
<div class="cb" style="left:669px;top:271px;width:143px;height:20px"></div>
<div class="t" style="left:673px;top:276px;font-size:12px">十进制度数</div>
<svg style="left:798px;top:278px" width="10" height="6"><path d="M0.5 0.5L5 5L9.5 0.5" stroke="#333" fill="none"/></svg>
<div class="t" style="left:669px;top:294px;font-size:12px">精度<span style="letter-spacing:1.4px">(<u>N</u>):</span></div>
<div class="cb" style="left:669px;top:308px;width:143px;height:20px"></div>
<div class="t" style="left:672px;top:313px;font-size:12px">0</div>
<svg style="left:798px;top:315px" width="10" height="6"><path d="M0.5 0.5L5 5L9.5 0.5" stroke="#333" fill="none"/></svg>
<div class="a" style="left:669px;top:339px;width:13px;height:13px;background:#fff;border:1px solid #333"></div>
<div class="t" style="left:685px;top:341px;font-size:12px">顺时针<span style="letter-spacing:1.4px">(<u>C</u>)</span></div>
<!-- insertion scale -->
<div class="gb" style="left:489px;top:374px;width:330px;height:52px"></div>
<div class="a" style="left:496px;top:367px;width:100px;height:12px;background:#f0f0f0"></div>
<div class="t" style="left:498px;top:369px;font-size:12px">插入时的缩放单位</div>
<div class="t" style="left:496px;top:384px;font-size:12px">用于缩放插入内容的单位:</div>
<div class="a" style="left:496px;top:398px;width:143px;height:20px;background:#cce4f7;border:1px solid #0078d7"></div>
<div class="t" style="left:500px;top:403px;font-size:12px">厘米</div>
<svg style="left:625px;top:405px" width="10" height="6"><path d="M0.5 0.5L5 5L9.5 0.5" stroke="#333" fill="none"/></svg>
<!-- other groups -->
<div class="gb" style="left:489px;top:440px;width:330px;height:46px"></div>
<div class="gb" style="left:489px;top:500px;width:330px;height:53px"></div>
<!-- buttons -->
<div class="a" style="left:490px;top:564px;width:60px;height:19px;background:#e5f1fb;border:2px solid #0078d7"></div>
<div class="a" style="left:640px;top:564px;width:103px;height:19px;background:#e1e1e1;border:1px solid #adadad"></div>
<div class="t" style="left:661px;top:568px;font-size:12px">方向<span style="letter-spacing:1.4px">(<u>D</u>)</span><span style="letter-spacing:3.5px">...</span></div>
<div class="a" style="left:752px;top:564px;width:66px;height:19px;background:#e1e1e1;border:1px solid #adadad"></div>
<div class="t" style="left:762px;top:568px;font-size:12px">帮助<span style="letter-spacing:1.4px">(<u>H</u>)</span></div>
<!-- dropdown list -->
<div class="a" style="left:496px;top:417px;width:143px;height:267px;background:#fff;border:1px solid #0078d7;overflow:hidden">
<div class="a" style="left:0;top:61px;width:141px;height:12px;background:#0078d7;outline:1px dotted #f5a040;outline-offset:-1px"></div>
<div class="it" style="top:2px">无单位</div>
<div class="it" style="top:14px">英寸</div>
<div class="it" style="top:26px">英尺</div>
<div class="it" style="top:38px">美制测量英尺</div>
<div class="it" style="top:50px">英里</div>
<div class="it" style="top:62px;color:#fff">毫米</div>
<div class="it" style="top:74px">厘米</div>
<div class="it" style="top:86px">米</div>
<div class="it" style="top:98px">千米</div>
<div class="it" style="top:110px">微英寸</div>
<div class="it" style="top:122px">密耳</div>
<div class="it" style="top:134px">码</div>
<div class="it" style="top:146px">埃</div>
<div class="it" style="top:158px">毫微米</div>
<div class="it" style="top:170px">微米</div>
<div class="it" style="top:182px">分米</div>
<div class="it" style="top:194px">十米</div>
<div class="it" style="top:206px">百米</div>
<div class="it" style="top:218px">百万公里</div>
<div class="it" style="top:230px">天文单位</div>
<div class="it" style="top:242px">光年</div>
<div class="it" style="top:254px">秒差距</div>
</div>
</div>
<!-- command line -->
<div class="a" style="left:242px;top:728px;width:56px;height:25px;background:rgba(40,46,58,0.85)"></div>
<svg style="left:245px;top:731px" width="50" height="19">
<path d="M2 1V18M5 1V18" stroke="#c8ccd2" stroke-width="2" stroke-dasharray="2 1.5"/>
<path d="M12 5L20 13M20 5L12 13" stroke="#c8ccd2" stroke-width="1.8"/>
<path d="M33.5 16.5L41.5 8.5" stroke="#c8ccd2" stroke-width="2.4"/><circle cx="42.5" cy="7.5" r="3.6" fill="#c8ccd2"/><circle cx="44.6" cy="5.4" r="2.1" fill="#2b313c"/><path d="M43.5 3.5L47 0.5M45.5 6.5L48.5 4" stroke="#2b313c" stroke-width="2"/>
</svg>
<div class="a" style="left:298px;top:728px;width:660px;height:25px;background:#c8c8c8;border-radius:2px 2px 0 0"></div>
<svg style="left:302px;top:734px" width="30" height="13"><rect x="0.5" y="0.5" width="15" height="12" fill="none" stroke="#7a7a7a"/><path d="M0.5 3H15.5" stroke="#7a7a7a" stroke-width="1.5"/><path d="M3 6L5.5 7.5L3 9M6 10H9" stroke="#7a7a7a" fill="none"/><path d="M20 5L27 5L23.5 9Z" fill="#8a8a8a"/></svg>
<div class="t" style="left:329px;top:736px;font-size:12px;font-family:'Liberation Mono',monospace;color:#1a1a1a">_UNITS</div>
<div class="a" style="left:947px;top:738px;width:0;height:0;border-left:4px solid transparent;border-right:4px solid transparent;border-bottom:5px solid #505050"></div>
<!-- bottom bar -->
<div class="a" style="left:2px;top:754px;width:1200px;height:31px;background:#222932"></div>
<div class="a" style="left:2px;top:754px;width:1200px;height:1px;background:#3b4453"></div>
<div class="a" style="left:0;top:783px;width:1202px;height:2px;background:#2e3541"></div>
<svg style="left:0;top:754px" width="200" height="18">
<path d="M9 0C14 0 15 4 16 9C17 14 18 18 24 18H56C60 18 61 14 62 9C63 4 64 0 70 0Z" fill="#3b4453"/>
<path d="M64 0C66 3 63 17 70 17H112C115 17 116 10 117 6C118 2 119 0 124 0Z" fill="#2f3643"/>
<path d="M118 0C121 3 118 17 124 17H166C169 17 170 10 171 6C172 2 173 0 178 0Z" fill="#2f3643"/>
<path d="M172 17C176 17 177 0 184 0H194C190 4 191 17 186 17Z" fill="#2f3643"/>
</svg>
<div class="t" style="left:25px;top:758px;font-size:12px;color:#ffffff">模型</div>
<div class="t" style="left:72px;top:758px;font-size:12px;color:#d0d4da">布局1</div>
<div class="t" style="left:126px;top:758px;font-size:12px;color:#d0d4da">布局2</div>
<svg style="left:179px;top:758px" width="10" height="10"><path d="M5 0.5V9.5M0.5 5H9.5" stroke="#c4c8ce" stroke-width="2"/></svg>
<!-- status bar -->
<div class="a" style="left:684px;top:756px;width:93px;height:24px;background:#343c4a"></div>
<div class="a" style="left:781px;top:756px;width:100px;height:24px;background:#343c4a"></div>
<div class="a" style="left:884px;top:756px;width:52px;height:24px;background:#343c4a"></div>
<div class="a" style="left:947px;top:756px;width:107px;height:24px;background:#343c4a"></div>
<div class="a" style="left:1057px;top:756px;width:38px;height:24px;background:#343c4a"></div>
<div class="a" style="left:1097px;top:756px;width:24px;height:24px;background:#343c4a"></div>
<div class="a" style="left:1124px;top:756px;width:24px;height:24px;background:#343c4a"></div>
<div class="a" style="left:1151px;top:756px;width:51px;height:24px;background:#343c4a"></div>
<div class="t" style="left:686px;top:761.5px;font-size:12.5px;color:#f0f0f0">模型</div>
<div class="a" style="left:715px;top:757px;width:22px;height:22px;background:#5b8ec8"></div>
<svg style="left:718px;top:760px" width="16" height="16"><path d="M4 1V15M8 1V15M12 1V15M1 4H15M1 8H15M1 12H15" stroke="#fff" stroke-width="1.3"/></svg>
<svg style="left:743px;top:761px" width="14" height="14" fill="#e8e8e8"><rect x="1" y="1" width="2" height="2"/><rect x="6" y="1" width="2" height="2"/><rect x="11" y="1" width="2" height="2"/><rect x="1" y="6" width="2" height="2"/><rect x="6" y="6" width="2" height="2"/><rect x="11" y="6" width="2" height="2"/><rect x="1" y="11" width="2" height="2"/><rect x="6" y="11" width="2" height="2"/><rect x="11" y="11" width="2" height="2"/></svg>
<div class="tri" style="left:765px;top:766px;border-width:4px 4px 0;border-top-color:#d8d8d8"></div>
<div class="a" style="left:781px;top:757px;width:22px;height:22px;background:#5b8ec8"></div>
<svg style="left:784px;top:760px" width="16" height="16" fill="none" stroke="#fff" stroke-width="1.4"><path d="M1 0V15H15M1 10H5V15"/></svg>
<svg style="left:806px;top:759px" width="18" height="18" fill="none" stroke="#e0e0e0" stroke-width="1.3"><circle cx="8" cy="10" r="6"/><path d="M8 10L16 4M8 10H16"/></svg>
<div class="tri" style="left:831px;top:766px;border-width:4px 4px 0;border-top-color:#d8d8d8"></div>
<svg style="left:845px;top:758px" width="20" height="20"><path d="M10 1V19" stroke="#5ac04a" stroke-width="1.4"/><path d="M3 5L17 17" stroke="#d84040" stroke-width="1.4"/><circle cx="10" cy="11" r="1.6" fill="#fff" stroke="#333" stroke-width="0.6"/></svg>
<div class="tri" style="left:870px;top:766px;border-width:4px 4px 0;border-top-color:#d8d8d8"></div>
<div class="a" style="left:884px;top:757px;width:22px;height:22px;background:#5b8ec8"></div>
<svg style="left:887px;top:760px" width="16" height="16" fill="none" stroke="#fff" stroke-width="1.4"><path d="M1 15H15M1 15L14 3"/><circle cx="8" cy="9" r="1.5" fill="#fff"/></svg>
<div class="a" style="left:908px;top:757px;width:22px;height:22px;background:#5b8ec8"></div>
<svg style="left:911px;top:760px" width="16" height="16" fill="none" stroke="#fff" stroke-width="1.4"><rect x="3" y="3" width="12" height="12"/><rect x="1" y="1" width="4" height="4" fill="#5b8ec8"/></svg>
<div class="tri" style="left:935px;top:766px;border-width:4px 4px 0;border-top-color:#d8d8d8"></div>
<div class="a" style="left:950px;top:757px;width:22px;height:22px;background:#5b8ec8"></div>
<svg style="left:952px;top:759px" width="20" height="20" fill="#fff"><path d="M8 2L12 10L15 16L10 13L8 11L6 13L1 16L4 10Z"/><circle cx="15" cy="5" r="2.5" fill="none" stroke="#fff" stroke-width="1.2"/></svg>
<svg style="left:976px;top:759px" width="20" height="20" fill="#e0e0e0"><path d="M8 3L12 10L15 16L10 13L8 11L6 13L1 16L4 10Z"/><path d="M13 2L16 1L13 6L18 4" stroke="#e0e0e0" stroke-width="1.2" fill="none"/></svg>
<svg style="left:1000px;top:759px" width="20" height="20" fill="#e0e0e0"><path d="M9 2L13 10L16 16L11 13L9 11L7 13L2 16L5 10Z"/></svg>
<div class="t" style="left:1026px;top:762px;font-size:12px;color:#e8e8e8">1:1</div>
<div class="tri" style="left:1046px;top:766px;border-width:4px 4px 0;border-top-color:#d8d8d8"></div>
<svg style="left:1061px;top:759px" width="18" height="18" viewBox="0 0 14 14"><path d="M7 0.5L8.3 2.3L10.5 1.7L10.9 3.9L13.1 4.5L12.3 6.6L13.6 8.4L11.8 9.6L11.9 11.9L9.6 11.8L8.4 13.6L6.6 12.3L4.5 13.1L3.9 10.9L1.7 10.5L2.3 8.3L0.5 7L2.3 5.7L1.7 3.5L3.9 3.1L4.5 0.9L6.6 1.7Z" fill="#e0e0e0"/><circle cx="7" cy="7" r="2.3" fill="#343c4a"/></svg>
<div class="tri" style="left:1085px;top:766px;border-width:4px 4px 0;border-top-color:#d8d8d8"></div>
<svg style="left:1100px;top:759px" width="18" height="18"><path d="M9 1V17M1 9H17" stroke="#f0f0f0" stroke-width="2"/></svg>
<svg style="left:1127px;top:759px" width="20" height="18" fill="none" stroke="#e0e0e0" stroke-width="1.1"><rect x="1" y="1" width="6" height="6"/><circle cx="14" cy="6" r="3"/><path d="M7 10L11 17H3Z"/></svg>
<svg style="left:1154px;top:760px" width="18" height="16" fill="none" stroke="#e0e0e0" stroke-width="1.2"><rect x="1" y="2" width="16" height="12"/><path d="M4 11L8 7M4 8V11H7M14 5L10 9M14 8V5H11"/></svg>
<svg style="left:1180px;top:760px" width="18" height="16"><path d="M1 2H17M1 8H17M1 14H17" stroke="#e8e8e8" stroke-width="2"/></svg>
<div class="a" style="left:1201px;top:27px;width:1px;height:758px;background:#394150"></div>
</body></html>
